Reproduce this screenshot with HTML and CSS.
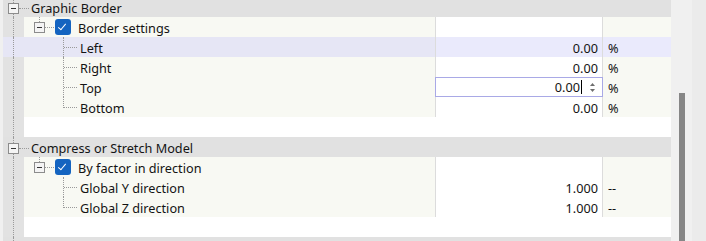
FILE: index.html
```html
<!DOCTYPE html>
<html>
<head>
	<title>Model Settings</title>
	<link rel="stylesheet" href="styles.css">
</head>
<body>
	<div class="window">
		<div class="tree">
			<!-- Graphic Border -->
			<div class="row header first">
				<div class="gutter"><span class="toggle root"></span></div>
				<div class="label">Graphic Border</div>
			</div>
			<div class="row">
				<div class="gutter"></div>
				<div class="label sub">
					<span class="toggle"></span>
					<span class="check"></span>
					Border settings
				</div>
				<div class="value"></div>
				<div class="unit"></div>
			</div>
			<div class="row selected">
				<div class="gutter"></div>
				<div class="label leaf">Left</div>
				<div class="value">0.00</div>
				<div class="unit">%</div>
			</div>
			<div class="row">
				<div class="gutter"></div>
				<div class="label leaf">Right</div>
				<div class="value">0.00</div>
				<div class="unit">%</div>
			</div>
			<div class="row">
				<div class="gutter"></div>
				<div class="label leaf">Top</div>
				<div class="value editing">
					<span>0.00</span><span class="caret"></span>
					<span class="spin">
						<svg width="7" height="11" viewBox="0 0 7 11"><path d="M3.5 1 L6 4 L1 4 Z" fill="#6e6e6e"/><path d="M1 7 L6 7 L3.5 10 Z" fill="#6e6e6e"/></svg>
					</span>
				</div>
				<div class="unit">%</div>
			</div>
			<div class="row">
				<div class="gutter"></div>
				<div class="label leaf last">Bottom</div>
				<div class="value">0.00</div>
				<div class="unit">%</div>
			</div>
			<div class="row blank">
				<div class="gutter"></div>
				<div class="label"></div>
			</div>

			<!-- Compress or Stretch Model -->
			<div class="row header">
				<div class="gutter"><span class="toggle root"></span></div>
				<div class="label">Compress or Stretch Model</div>
			</div>
			<div class="row">
				<div class="gutter"></div>
				<div class="label sub">
					<span class="toggle"></span>
					<span class="check"></span>
					By factor in direction
				</div>
				<div class="value"></div>
				<div class="unit"></div>
			</div>
			<div class="row">
				<div class="gutter"></div>
				<div class="label leaf">Global Y direction</div>
				<div class="value">1.000</div>
				<div class="unit">--</div>
			</div>
			<div class="row">
				<div class="gutter"></div>
				<div class="label leaf last">Global Z direction</div>
				<div class="value">1.000</div>
				<div class="unit">--</div>
			</div>
			<div class="row blank">
				<div class="gutter"></div>
				<div class="label"></div>
			</div>
			<div class="row header">
				<div class="gutter"></div>
				<div class="label"></div>
			</div>
		</div>
		<div class="scrollbar">
			<div class="track"><div class="thumb"></div></div>
			<div class="edge"></div>
		</div>
	</div>
</body>
</html>
```

FILE: styles.css
```css
/* Page */
* {
	box-sizing: border-box;
}
body {
	margin: 0;
	background-color: #f0f0f0;
	font-family: "Noto Sans", "Open Sans", sans-serif;
	font-size: 12.7px;
	color: #141414;
	overflow: hidden;
}
.window {
	display: flex;
	height: 241px;
	overflow: hidden;
}

/* Tree grid */
.tree {
	width: 668px;
	margin-left: 3px;
	background-color: #ffffff;
	flex: none;
}
.row {
	display: flex;
	height: 20px;
}
.gutter {
	width: 21px;
	flex: none;
	background-color: #e2e2e2;
	position: relative;
}
.gutter::before {
	content: "";
	position: absolute;
	left: 10px;
	top: 0;
	bottom: 0;
	border-left: 1px dotted #9a9a9a;
}
.label,
.value,
.unit {
	height: 20px;
	padding-top: 2px;
	line-height: 18px;
	white-space: nowrap;
}
.label {
	width: 411px;
	flex: none;
	background-color: #f8f9f3;
	position: relative;
}
.value {
	width: 167px;
	flex: none;
	border-left: 1px solid #dcdcdc;
	background-color: #ffffff;
	text-align: right;
	padding-right: 4px;
}
.unit {
	flex: 1;
	border-left: 1px solid #dcdcdc;
	background-color: #f8f9f3;
	padding-left: 5px;
}

/* Group header rows */
.header .gutter,
.header .label {
	background-color: #e1e1e1;
}
.header .label {
	flex: 1;
	padding-left: 7px;
}
.header .label::before {
	content: "";
	position: absolute;
	left: -5px;
	top: 11px;
	width: 10px;
	border-top: 1px dotted #9a9a9a;
}
.first {
	height: 17px;
}
.first .label {
	height: 17px;
	padding-top: 0;
	line-height: 17px;
}
.first .label::before {
	top: 8px;
}
.first .toggle.root {
	top: 3px;
}

/* Blank rows */
.blank .label {
	flex: 1;
	background-color: #ffffff;
}

/* Selected row */
.selected .gutter,
.selected .label {
	background-color: #e6e6f5;
}
.selected .value,
.selected .unit {
	background-color: #eaeafc;
}

/* Expand/collapse boxes */
.toggle {
	width: 11px;
	height: 11px;
	border: 1px solid #8c8c8c;
	background-color: #f4f4f4;
	position: absolute;
	z-index: 1;
}
.toggle::after {
	content: "";
	position: absolute;
	left: 2px;
	top: 4px;
	width: 5px;
	border-top: 1px solid #333333;
}
.toggle.root {
	left: 5px;
	top: 6px;
}

/* Node with checkbox */
.sub {
	padding-left: 54px;
}
.sub .toggle {
	left: 10px;
	top: 5px;
}
.sub::before {
	content: "";
	position: absolute;
	left: 15px;
	top: 0;
	height: 5px;
	border-left: 1px dotted #9a9a9a;
}
.sub::after {
	content: "";
	position: absolute;
	left: 21px;
	top: 10px;
	width: 9px;
	border-top: 1px dotted #9a9a9a;
}
.check {
	position: absolute;
	left: 31px;
	top: 2px;
	width: 16px;
	height: 16px;
	border-radius: 3px;
	background-color: #1464c0;
}
.check::after {
	content: "";
	position: absolute;
	left: 5px;
	top: 3px;
	width: 3px;
	height: 7px;
	border-right: 1.5px solid #ffffff;
	border-bottom: 1.5px solid #ffffff;
	transform: rotate(40deg);
}

/* Leaf items with tree connectors */
.leaf {
	padding-left: 56px;
}
.leaf::before {
	content: "";
	position: absolute;
	left: 39px;
	top: 0;
	height: 20px;
	border-left: 1px dotted #9a9a9a;
}
.leaf.last::before {
	height: 11px;
}
.leaf::after {
	content: "";
	position: absolute;
	left: 40px;
	top: 10px;
	width: 13px;
	border-top: 1px dotted #9a9a9a;
}

/* Value being edited */
.editing {
	border: 1px solid #a9a9e6;
	width: 168px;
	padding: 0;
	line-height: 18px;
	display: flex;
	justify-content: flex-end;
	align-items: center;
}
.caret {
	width: 1px;
	height: 14px;
	background-color: #000000;
	margin-left: 1px;
}
.spin {
	width: 20px;
	display: flex;
	justify-content: center;
	align-items: center;
	height: 18px;
}
.editing + .unit {
	border-left: none;
	padding-left: 5px;
}

/* Scrollbar */
.scrollbar {
	display: flex;
	margin-left: 1px;
	flex: 1;
}
.track {
	width: 20px;
	height: 100%;
	padding-left: 7px;
	background-color: #f0f0f0;
}
.thumb {
	margin-top: 93px;
	width: 6px;
	height: 160px;
	background-color: #868686;
}
.edge {
	flex: 1;
	background-color: #ebebeb;
}
```
